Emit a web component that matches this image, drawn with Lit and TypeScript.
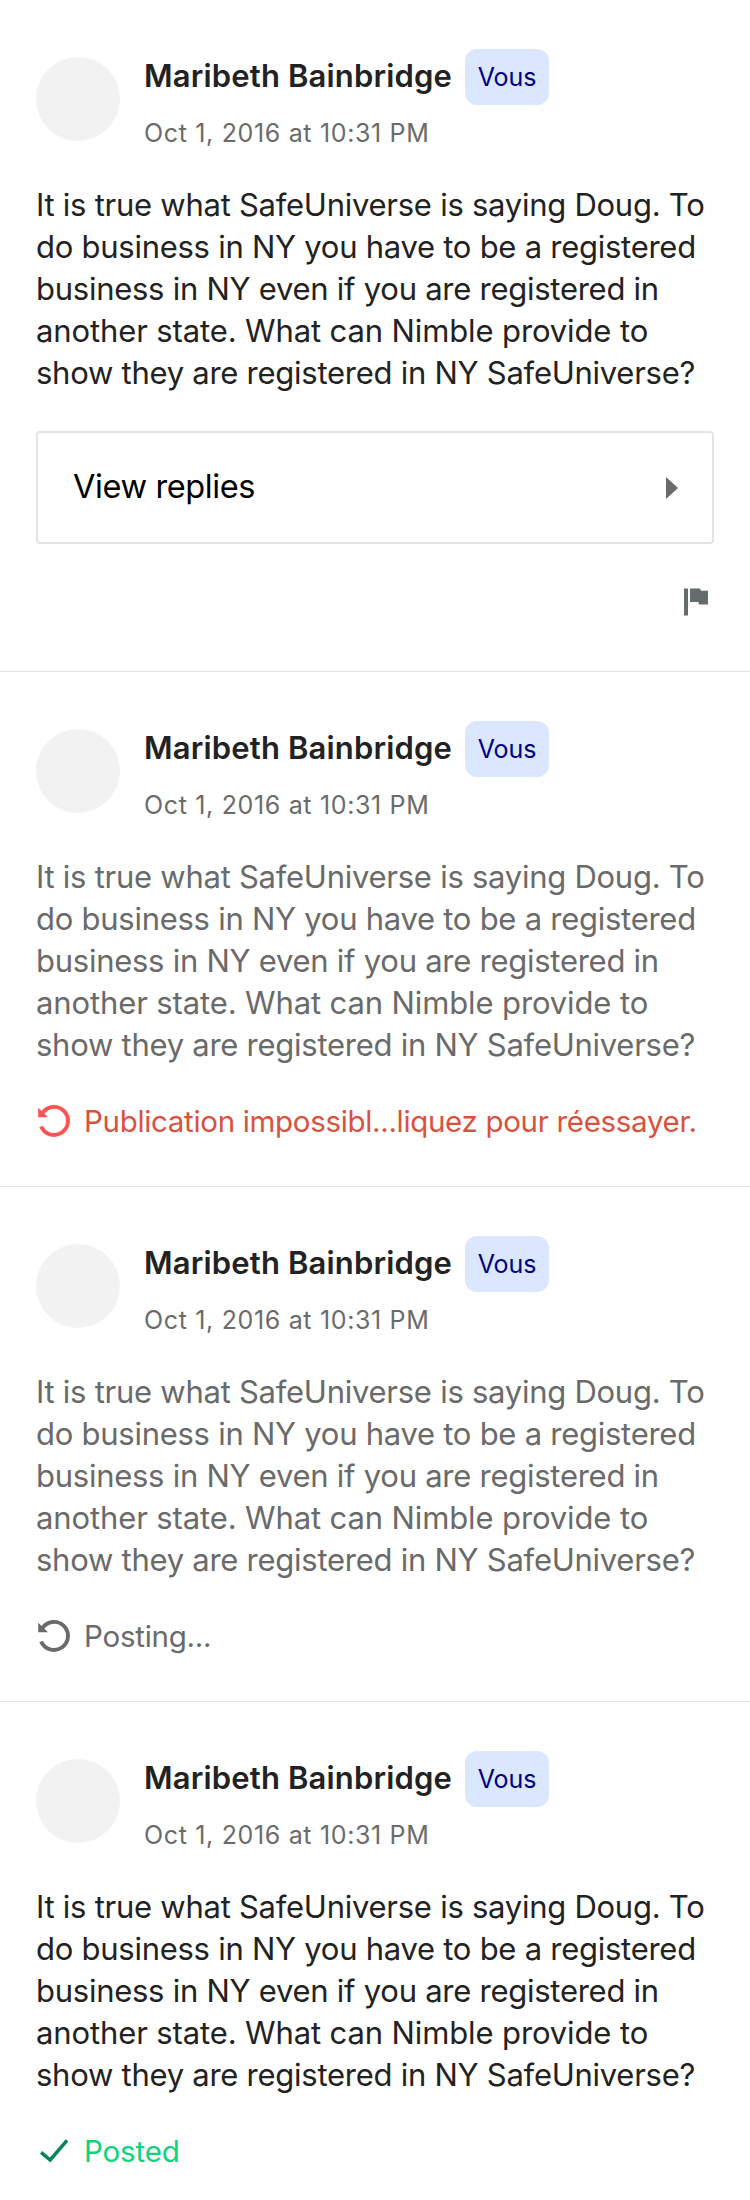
import { LitElement, html, css, svg } from "lit";
import { customElement, property } from "lit/decorators.js";
import { classMap } from "lit/directives/class-map.js";

type Status = "published" | "failed" | "posting" | "posted";

const BODY = [
  "It is true what SafeUniverse is saying Doug. To",
  "do business in NY you have to be a registered",
  "business in NY even if you are registered in",
  "another state. What can Nimble provide to",
  "show they are registered in NY SafeUniverse?",
];

const STATUS_TEXT: Record<string, string> = {
  failed: "Publication impossibl...liquez pour réessayer.",
  posting: "Posting...",
  posted: "Posted",
};

const retryIcon = svg`
  <path d="M6.3 10.2A14 14 0 1 1 5.1 23.4" fill="none" stroke="currentColor" stroke-width="3.9"/>
  <path d="M2.2 4.8V14.2H12L8.4 10.8Z" fill="currentColor"/>`;

const checkIcon = svg`
  <path d="M5.1 19.3L14.2 27L31 7.4" fill="none" stroke="currentColor" stroke-width="3.5"/>`;

@customElement("comment-item")
class CommentItem extends LitElement {
  @property() status: Status = "published";

  static styles = css`
    :host {
      display: block;
      box-sizing: border-box;
      padding: 49px 36px 47px;
      border-bottom: 1px solid #e4e4e4;
    }
    :host(:last-of-type) {
      border-bottom: 0;
      padding-bottom: 31px;
    }
    .header {
      display: flex;
      gap: 24px;
    }
    .avatar {
      width: 84px;
      height: 84px;
      margin-top: 8px;
      border-radius: 50%;
      background: #f2f2f2;
      flex: none;
    }
    .title {
      display: flex;
      gap: 12px;
    }
    .name {
      flex: 0 0 309px;
      line-height: 53px;
      font-size: 31px;
      font-weight: 600;
      letter-spacing: 0.16px;
      color: #222;
      white-space: nowrap;
    }
    .badge {
      box-sizing: border-box;
      width: 84px;
      height: 56px;
      line-height: 56px;
      border-radius: 12px;
      background: #dbe7ff;
      color: #000080;
      font-size: 25px;
      letter-spacing: -0.1px;
      text-align: center;
    }
    .date {
      margin-top: 10px;
      font-size: 25px;
      line-height: 36px;
      letter-spacing: 0.66px;
      color: #6b6b6b;
    }
    .body {
      margin: 33px 0 37px;
      font-size: 31px;
      line-height: 42px;
      letter-spacing: -0.26px;
      color: #222;
      white-space: nowrap;
    }
    .body.muted {
      color: #6a6a6a;
    }
    .line {
      display: block;
    }
    .line:nth-child(4) {
      letter-spacing: -0.12px;
    }
    .replies {
      box-sizing: border-box;
      height: 113px;
      display: flex;
      align-items: center;
      justify-content: space-between;
      padding: 0 34px 0 35px;
      border: 2px solid #e4e4e4;
      border-radius: 4px;
      color: #000;
      font-size: 32.5px;
      line-height: 40px;
      letter-spacing: -0.4px;
    }
    .replies span {
      padding-bottom: 1px;
    }
    .actions {
      display: flex;
      justify-content: flex-end;
      padding: 44px 6px 8px 0;
      color: #666b6b;
    }
    svg {
      display: block;
      flex: none;
    }
    .arrow {
      color: #6a6a6a;
    }
    .status {
      display: flex;
      gap: 12px;
      font-size: 29.5px;
      line-height: 36px;
      letter-spacing: -0.32px;
      white-space: nowrap;
    }
    .status.failed {
      color: #d9513f;
    }
    .status.failed svg {
      color: #ff5454;
    }
    .status.posting {
      color: #6a6a6a;
      letter-spacing: -0.24px;
    }
    .status.posted {
      color: #0cd37c;
      letter-spacing: -0.16px;
    }
    .status.posted svg {
      color: #068556;
    }
  `;

  private renderReplies() {
    return html`
      <div class="replies">
        <span>View replies</span>
        <svg class="arrow" width="12" height="22" viewBox="0 0 12 22">
          <path d="M0 0L12 11L0 22Z" fill="currentColor" />
        </svg>
      </div>
      <div class="actions">
        <svg width="24" height="28" viewBox="0 0 24 28">
          <path
            d="M0 .5H4V27.5H0ZM6 .5H16L17 2.7H24V16.5H15L14.3 14H6Z"
            fill="currentColor"
          />
        </svg>
      </div>
    `;
  }

  private renderStatus() {
    return html`
      <div class="status ${this.status}">
        <svg width="36" height="36" viewBox="0 0 36 36">
          ${this.status === "posted" ? checkIcon : retryIcon}
        </svg>
        <span>${STATUS_TEXT[this.status]}</span>
      </div>
    `;
  }

  render() {
    const muted = this.status === "failed" || this.status === "posting";
    return html`
      <div class="header">
        <div class="avatar"></div>
        <div>
          <div class="title">
            <div class="name">Maribeth Bainbridge</div>
            <div class="badge">Vous</div>
          </div>
          <div class="date">Oct 1, 2016 at 10:31 PM</div>
        </div>
      </div>
      <div class=${classMap({ body: true, muted })}>
        ${BODY.map((line) => html`<span class="line">${line}</span>`)}
      </div>
      ${this.status === "published" ? this.renderReplies() : this.renderStatus()}
    `;
  }
}

@customElement("app-root")
class AppRoot extends LitElement {
  static styles = css`
    :host {
      display: block;
      width: 750px;
      height: 2200px;
      overflow: hidden;
      background: #fff;
      font-family: Inter, "Liberation Sans", sans-serif;
    }
    .first {
      height: 672px;
    }
  `;

  render() {
    return html`
      <comment-item class="first" status="published"></comment-item>
      <comment-item status="failed"></comment-item>
      <comment-item status="posting"></comment-item>
      <comment-item status="posted"></comment-item>
    `;
  }
}
